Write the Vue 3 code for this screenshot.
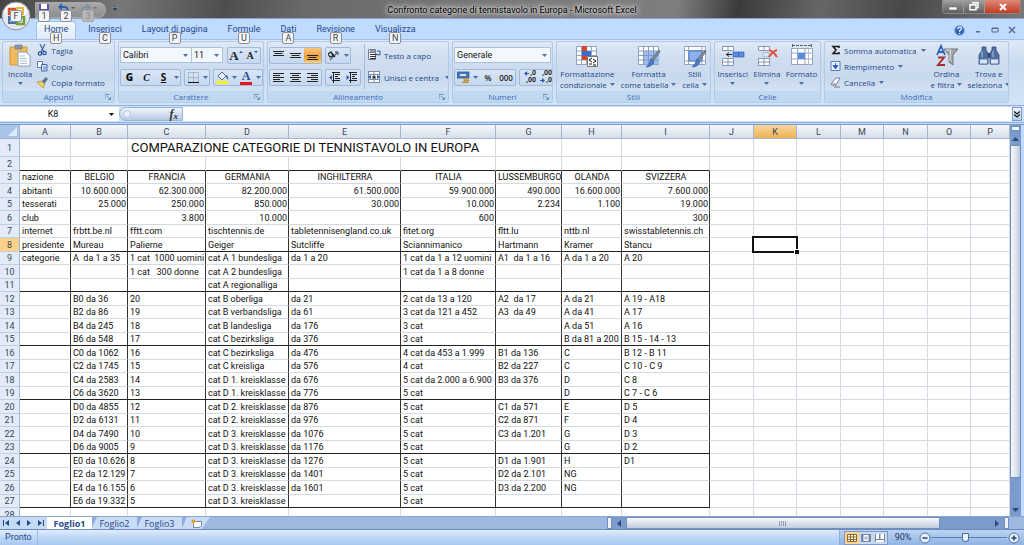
<script setup>
import { ref } from 'vue'

const tabs = [
  { label: 'Home', key: 'H' },
  { label: 'Inserisci', key: 'C' },
  { label: 'Layout di pagina', key: 'P' },
  { label: 'Formule', key: 'U' },
  { label: 'Dati', key: 'A' },
  { label: 'Revisione', key: 'R' },
  { label: 'Visualizza', key: 'N' }
]
const activeTab = ref('Home')
const sheets = ['Foglio1', 'Foglio2', 'Foglio3']
const activeSheet = ref('Foglio1')
const zoom = ref(90)

const columns = 'ABCDEFGHIJKLMNOP'.split('')
const spare = columns.slice(9)
const dataColumns = columns.slice(0, 9)
const lines = [
  ['nazione', 'BELGIO', 'FRANCIA', 'GERMANIA', 'INGHILTERRA', 'ITALIA', 'LUSSEMBURGO', 'OLANDA', 'SVIZZERA'],
  ['abitanti', '10.600.000', '62.300.000', '82.200.000', '61.500.000', '59.900.000', '490.000', '16.600.000', '7.600.000'],
  ['tesserati', '25.000', '250.000', '850.000', '30.000', '10.000', '2.234', '1.100', '19.000'],
  ['club', '', '3.800', '10.000', '', '600', '', '', '300'],
  ['internet', 'frbtt.be.nl', 'fftt.com', 'tischtennis.de', 'tabletennisengland.co.uk', 'fitet.org', 'fltt.lu', 'nttb.nl', 'swisstabletennis.ch'],
  ['presidente', 'Mureau', 'Palierne', 'Geiger', 'Sutcliffe', 'Sciannimanico', 'Hartmann', 'Kramer', 'Stancu'],
  ['categorie', 'A  da 1 a 35', '1 cat  1000 uomini', 'cat A 1 bundesliga', 'da 1 a 20', '1 cat da 1 a 12 uomini', 'A1  da 1 a 16', 'A da 1 a 20', 'A 20'],
  ['', '', '1 cat   300 donne', 'cat A 2 bundesliga', '', '1 cat da 1 a 8 donne', '', '', ''],
  ['', '', '', 'cat A regionalliga', '', '', '', '', ''],
  ['', 'B0 da 36', '20', 'cat B oberliga', 'da 21', '2 cat da 13 a 120', 'A2  da 17', 'A da 21', 'A 19 - A18'],
  ['', 'B2 da 86', '19', 'cat B verbandsliga', 'da 61', '3 cat da 121 a 452', 'A3  da 49', 'A da 41', 'A 17'],
  ['', 'B4 da 245', '18', 'cat B landesliga', 'da 176', '3 cat', '', 'A da 51', 'A 16'],
  ['', 'B6 da 548', '17', 'cat C bezirksliga', 'da 376', '3 cat', '', 'B da 81 a 200', 'B 15 - 14 - 13'],
  ['', 'C0 da 1062', '16', 'cat C bezirksliga', 'da 476', '4 cat da 453 a 1.999', 'B1 da 136', 'C', 'B 12 - B 11'],
  ['', 'C2 da 1745', '15', 'cat C kreisliga', 'da 576', '4 cat', 'B2 da 227', 'C', 'C 10 - C 9'],
  ['', 'C4 da 2583', '14', 'cat D 1. kreisklasse', 'da 676', '5 cat da 2.000 a 6.900', 'B3 da 376', 'D', 'C 8'],
  ['', 'C6 da 3620', '13', 'cat D 1. kreisklasse', 'da 776', '5 cat', '', 'D', 'C 7 - C 6'],
  ['', 'D0 da 4855', '12', 'cat D 2. kreisklasse', 'da 876', '5 cat', 'C1 da 571', 'E', 'D 5'],
  ['', 'D2 da 6131', '11', 'cat D 2. kreisklasse', 'da 976', '5 cat', 'C2 da 871', 'F', 'D 4'],
  ['', 'D4 da 7490', '10', 'cat D 3. kreisklasse', 'da 1076', '5 cat', 'C3 da 1.201', 'G', 'D 3'],
  ['', 'D6 da 9005', '9', 'cat D 3. kreisklasse', 'da 1176', '5 cat', '', 'G', 'D 2'],
  ['', 'E0 da 10.626', '8', 'cat D 3. kreisklasse', 'da 1276', '5 cat', 'D1 da 1.901', 'H', 'D1'],
  ['', 'E2 da 12.129', '7', 'cat D 3. kreisklasse', 'da 1401', '5 cat', 'D2 da 2.101', 'NG', ''],
  ['', 'E4 da 16.155', '6', 'cat D 3. kreisklasse', 'da 1601', '5 cat', 'D3 da 2.200', 'NG', ''],
  ['', 'E6 da 19.332', '5', 'cat D 3. kreisklasse', '', '5 cat', '', '', '']
]
const rows = lines.map((cells, i) => ({ n: i + 3, cells }))
const sectionEnds = [8, 11, 15, 19, 23, 27]

function cellClass(row, i) {
  return {
    center: row.n === 3 && i > 0,
    right: row.n > 3 && row.n < 7 && i > 0
  }
}
</script>

<template>
  <div class="app">
    <header class="titlebar">
      <button class="office" aria-label="Pulsante Office">
        <svg width="30" height="30" viewBox="0 0 30 30">
          <circle cx="15" cy="15" r="14" fill="#e3e6ea" stroke="#8f959c" />
          <ellipse cx="15" cy="10" rx="11" ry="8" fill="#fbfcfd" />
          <path d="M8 8h6v5H8z" fill="none" stroke="#d8532c" stroke-width="2.500" />
          <path d="M16 7h6v6h-6z" fill="none" stroke="#ecb63e" stroke-width="2" />
          <path d="M8 16h6v6H8z" fill="none" stroke="#3e74b8" stroke-width="2" />
          <path d="M16 16h7v7h-7z" fill="none" stroke="#6da13c" stroke-width="2.500" />
        </svg>
        <span class="tip mid">F</span>
      </button>
      <div class="quick">
        <button aria-label="Salva">
          <svg width="12" height="12" viewBox="0 0 12 12"><path d="M1 1h10v10H1z" fill="#5a55b5" /><path d="M3 1h6v5H3z" fill="#fff" /><path d="M3 8h6v3H3z" fill="#d6d9ee" /></svg>
          <span class="tip low">1</span>
        </button>
        <button aria-label="Annulla">
          <svg width="17" height="12" viewBox="0 0 17 12"><path d="M2 4h5q4 1 2 6" fill="none" stroke="#2d5cb8" stroke-width="2" /><path d="M0 4l4-4v8z" fill="#2d5cb8" /><path d="M13 4h4l-2 2z" fill="#555" /></svg>
          <span class="tip low">2</span>
        </button>
        <button aria-label="Ripeti">
          <svg width="17" height="12" viewBox="0 0 17 12"><path d="M9 4H5Q1 5 3 10" fill="none" stroke="#7f8ea5" stroke-width="2" /><path d="M11 4L7 0v8z" fill="#7f8ea5" /><path d="M13 4h4l-2 2z" fill="#777" /></svg>
          <span class="tip low dim">3</span>
        </button>
      </div>
      <button class="customize" aria-label="Personalizza barra di accesso rapido">
        <svg width="6" height="6" viewBox="0 0 6 6"><path d="M1 0h4v1H1zM0 2h6L3 5z" fill="#1c2a44" stroke="#9db3d8" stroke-width=".4" /></svg>
      </button>
      <h1 class="caption">Confronto categorie di tennistavolo in Europa - Microsoft Excel</h1>
      <div class="winbtns">
        <button aria-label="Riduci a icona"><svg width="10" height="8" viewBox="0 0 10 8"><path d="M1 4h8v3H1z" fill="#fff" stroke="#555" stroke-width=".5" /></svg></button>
        <button aria-label="Ripristino"><svg width="10" height="9" viewBox="0 0 10 9"><path d="M3 .8h6v5H7M1 2.800h6v5H1z" fill="none" stroke="#fff" stroke-width="1.400" /></svg></button>
        <button class="close" aria-label="Chiudi"><svg width="10" height="8" viewBox="0 0 10 8"><path d="M2 1l6 6M8 1L2 7" stroke="#fff" stroke-width="2" /></svg></button>
      </div>
    </header>

    <nav class="tabs">
      <button v-for="t in tabs" :key="t.key" class="tab" :class="{ on: activeTab === t.label }" @click="activeTab = t.label">
        {{ t.label }}<span class="tip under">{{ t.key }}</span>
      </button>
      <div class="mdi">
        <button aria-label="Guida"><svg width="11" height="11" viewBox="0 0 11 11"><circle cx="5.500" cy="5.500" r="5" fill="#2f66b8" stroke="#9ebde8" /><path d="M3.800 4.200q0-2 1.800-2t1.800 1.600q0 1-1.800 2v1M5.600 8v1" fill="none" stroke="#fff" stroke-width="1.200" /></svg></button>
        <button aria-label="Riduci finestra"><svg width="8" height="8" viewBox="0 0 8 8"><path d="M2 5h4v1.500H2z" fill="#5b6b84" /></svg></button>
        <button aria-label="Ripristina finestra"><svg width="8" height="8" viewBox="0 0 8 8"><path d="M1 2h6v4H1zM1 2.500h6" fill="none" stroke="#5b6b84" /></svg></button>
        <button aria-label="Chiudi finestra"><svg width="8" height="8" viewBox="0 0 8 8"><path d="M1 1l6 6M7 1L1 7" stroke="#5b6b84" stroke-width="1.400" /></svg></button>
      </div>
    </nav>

    <section class="ribbon">
      <div class="group g-clip">
        <div class="body">
          <button class="big">
            <svg width="24" height="24" viewBox="0 0 24 24"><path d="M2 3h17v18H2z" fill="#f0bb58" stroke="#d29a3a" /><path d="M7 1h7v4H7z" fill="#8b96a8" stroke="#66718a" stroke-width=".6" /><path d="M10 8h8l4 4v10H10z" fill="#fff" stroke="#8a9cbc" /><path d="M12 12h5M12 14.500h7M12 17h7M12 19.500h7" stroke="#a9bbd9" /></svg>
            <span>Incolla</span>
            <svg class="arr" width="5" height="3" viewBox="0 0 5 3"><path d="M0 0h5L2.500 3z" /></svg>
          </button>
          <div class="stack">
            <button class="row"><svg width="11" height="12" viewBox="0 0 11 12"><path d="M3 0l4 8M8 0L4 8" stroke="#4a6aa5" stroke-width="1.300" /><circle cx="3" cy="9.500" r="1.700" fill="none" stroke="#274f9c" stroke-width="1.200" /><circle cx="7.500" cy="9" r="1.700" fill="none" stroke="#274f9c" stroke-width="1.200" /></svg>Taglia</button>
            <button class="row"><svg width="11" height="12" viewBox="0 0 11 12"><path d="M.5 1.500h5v6h-5z" fill="#fff" stroke="#5478b5" /><path d="M4.500 4.500h5.500v6.500H4.500z" fill="#dfe9f8" stroke="#3f67ad" /><path d="M6 7h3M6 9h3" stroke="#5478b5" /></svg>Copia</button>
            <button class="row"><svg width="11" height="12" viewBox="0 0 11 12"><path d="M0 6l5-1 3 3-2 4z" fill="#f0cf62" stroke="#a98324" stroke-width=".6" /><path d="M5 5l4-4 2 2-4 5z" fill="#5d6f91" /></svg>Copia formato</button>
          </div>
        </div>
        <footer>Appunti<svg class="launch" width="6" height="6" viewBox="0 0 6 6"><path d="M0 5V.5h4.500M2 2l3 3M5.500 3v2.500H3" /></svg></footer>
      </div>

      <div class="group g-font">
        <div class="body lines">
          <div class="line">
            <div class="combo wide"><select aria-label="Tipo di carattere"><option>Calibri</option></select><svg class="arr" width="5" height="3" viewBox="0 0 5 3"><path d="M0 0h5L2.500 3z" /></svg></div>
            <div class="combo num"><select aria-label="Dimensione carattere"><option>11</option></select><svg class="arr" width="5" height="3" viewBox="0 0 5 3"><path d="M0 0h5L2.500 3z" /></svg></div>
            <div class="box push">
              <button class="serif big-a" aria-label="Aumenta dimensione carattere">A<svg width="4" height="8" viewBox="0 0 4 8"><path d="M0 2h4L2 0z" fill="#2a4f96" /></svg></button>
              <button class="serif small-a" aria-label="Riduci dimensione carattere">A<svg width="4" height="8" viewBox="0 0 4 8"><path d="M0 0h4L2 2z" fill="#2a4f96" /></svg></button>
            </div>
          </div>
          <div class="line">
            <div class="box"><button class="fmt"><b>G</b></button><button class="fmt"><i>C</i></button><button class="fmt"><u>S</u></button><button class="thin" aria-label="Opzioni sottolineato"><svg class="arr" width="5" height="3" viewBox="0 0 5 3"><path d="M0 0h5L2.500 3z" /></svg></button></div>
            <div class="box"><button class="sq" aria-label="Bordi"><svg width="11" height="11" viewBox="0 0 11 11"><path d="M.5 .5h10v9.500M5.500 .5v10M.5 .5v10M.5 5.500h10" fill="none" stroke="#8292ac" stroke-dasharray="1 1" /><path d="M0 10.500h11" stroke="#111" /></svg></button><button class="thin" aria-label="Opzioni bordi"><svg class="arr" width="5" height="3" viewBox="0 0 5 3"><path d="M0 0h5L2.500 3z" /></svg></button></div>
            <div class="box"><button class="sq" aria-label="Colore riempimento"><svg width="13" height="13" viewBox="0 0 13 13"><path d="M0 10h12v3H0z" fill="#ffee22" /><path d="M2 5l4-4 4 4-4 4z" fill="#e8edf5" stroke="#56698e" /><path d="M10 4q3 1 2 5l-2-3z" fill="#3764b4" /></svg></button><button class="thin" aria-label="Opzioni riempimento"><svg class="arr" width="5" height="3" viewBox="0 0 5 3"><path d="M0 0h5L2.500 3z" /></svg></button><button class="fontcolor" aria-label="Colore carattere">A</button><button class="thin" aria-label="Opzioni colore carattere"><svg class="arr" width="5" height="3" viewBox="0 0 5 3"><path d="M0 0h5L2.500 3z" /></svg></button></div>
          </div>
        </div>
        <footer>Carattere<svg class="launch" width="6" height="6" viewBox="0 0 6 6"><path d="M0 5V.5h4.500M2 2l3 3M5.500 3v2.500H3" /></svg></footer>
      </div>

      <div class="group g-align">
        <div class="body">
          <div class="lines">
            <div class="line">
              <div class="box">
                <button class="al" aria-label="Allinea in alto"><svg width="11" height="11" viewBox="0 0 11 11"><path d="M0 1.500h11M1.500 3.500h8M0 5.500h11" /></svg></button>
                <button class="al" aria-label="Allinea al centro verticalmente"><svg width="11" height="11" viewBox="0 0 11 11"><path d="M0 3.500h11M1.500 5.500h8M0 7.500h11" /></svg></button>
                <button class="al hot" aria-label="Allinea in basso"><svg width="11" height="11" viewBox="0 0 11 11"><path d="M0 5.500h11M1.500 7.500h8M0 9.500h11" /></svg></button>
              </div>
              <div class="box"><button class="sq" aria-label="Orientamento"><svg width="12" height="11" viewBox="0 0 12 11"><path d="M2 10l8-8M10 2H7M10 2v3" fill="none" stroke="#5d6c86" stroke-width="1.300" /><path d="M0 4l3-2 2 4-3 1zM4 3l3 4" fill="none" stroke="#222" stroke-width="1.200" /></svg></button><button class="thin" aria-label="Opzioni orientamento"><svg class="arr" width="5" height="3" viewBox="0 0 5 3"><path d="M0 0h5L2.500 3z" /></svg></button></div>
            </div>
            <div class="line">
              <div class="box">
                <button class="al" aria-label="Allinea a sinistra"><svg width="11" height="11" viewBox="0 0 11 11"><path d="M0 1.500h11M0 3.500h7M0 5.500h11M0 7.500h7M0 9.500h11" /></svg></button>
                <button class="al" aria-label="Centra"><svg width="11" height="11" viewBox="0 0 11 11"><path d="M0 1.500h11M2 3.500h7M0 5.500h11M2 7.500h7M0 9.500h11" /></svg></button>
                <button class="al" aria-label="Allinea a destra"><svg width="11" height="11" viewBox="0 0 11 11"><path d="M0 1.500h11M4 3.500h7M0 5.500h11M4 7.500h7M0 9.500h11" /></svg></button>
              </div>
              <div class="box">
                <button class="al" aria-label="Riduci rientro"><svg width="11" height="11" viewBox="0 0 11 11"><path d="M3 .5h8M6 2.500h5M6 4.500h3M6 6.500h5M3 8.500h8M4.500 0v11" /><path d="M0 5.500l3-2.500v5z" fill="#2c59ab" stroke="none" /></svg></button>
                <button class="al" aria-label="Aumenta rientro"><svg width="11" height="11" viewBox="0 0 11 11"><path d="M3 .5h8M6 2.500h5M6 4.500h3M6 6.500h5M3 8.500h8M4.500 0v11" /><path d="M3.500 5.500L.5 3v5z" fill="#2c59ab" stroke="none" /></svg></button>
              </div>
            </div>
          </div>
          <div class="lines wrapcol">
            <button class="row"><svg width="13" height="12" viewBox="0 0 13 12"><path d="M.5 .5h7v3h-7zM.5 3.500h7v7h-7z" fill="#fff" stroke="#6e7f9c" /><path d="M2 5.500h8M2 7.500h6M2 9.500h6M2 2h5" stroke="#333" /><path d="M9 2h3v4h-2" fill="none" stroke="#2c59ab" /></svg>Testo a capo</button>
            <button class="row"><svg width="13" height="12" viewBox="0 0 13 12"><path d="M.5 .5h11v11H.5zM.5 3.500h11M.5 8.500h11M6 .5v3M6 8.500v3" fill="#fff" stroke="#7a8aa5" /><path d="M0 6l3-2v4zM12 6L9 4v4z" fill="#2c59ab" /><path d="M5 8V5h2v3M5 6.500h2" fill="none" stroke="#222" /></svg>Unisci e centra<svg class="arr far" width="5" height="3" viewBox="0 0 5 3"><path d="M0 0h5L2.500 3z" /></svg></button>
          </div>
        </div>
        <footer>Allineamento<svg class="launch" width="6" height="6" viewBox="0 0 6 6"><path d="M0 5V.5h4.500M2 2l3 3M5.500 3v2.500H3" /></svg></footer>
      </div>

      <div class="group g-num">
        <div class="body lines">
          <div class="line"><div class="combo full"><select aria-label="Formato numero"><option>Generale</option></select><svg class="arr" width="5" height="3" viewBox="0 0 5 3"><path d="M0 0h5L2.500 3z" /></svg></div></div>
          <div class="line">
            <div class="box"><button class="sq" aria-label="Formato contabilità"><svg width="13" height="12" viewBox="0 0 13 12"><path d="M0 1h12v6H0z" fill="#4877bd" stroke="#2c559c" stroke-width=".8" /><path d="M3 4h6" stroke="#d5e2f6" stroke-width="2" /><path d="M6 7h5v1H6zM7 9h5v1H7zM5 11h6v1H5z" fill="#e0b33c" stroke="#a87d1b" stroke-width=".6" /></svg></button><button class="thin" aria-label="Altri formati contabilità"><svg class="arr" width="5" height="3" viewBox="0 0 5 3"><path d="M0 0h5L2.500 3z" /></svg></button><button class="txt">%</button><button class="txt">000</button></div>
            <div class="box">
              <button class="dec" aria-label="Aumenta decimali"><span><svg width="5" height="5" viewBox="0 0 5 5"><path d="M0 2.500L3 0v2h2v1H3v2z" fill="#2c59ab" /></svg>,0</span><span>,00</span></button>
              <button class="dec" aria-label="Diminuisci decimali"><span>,00</span><span><svg width="5" height="5" viewBox="0 0 5 5"><path d="M5 2.500L2 0v2H0v1h2v2z" fill="#2c59ab" /></svg>,0</span></button>
            </div>
          </div>
        </div>
        <footer>Numeri<svg class="launch" width="6" height="6" viewBox="0 0 6 6"><path d="M0 5V.5h4.500M2 2l3 3M5.500 3v2.500H3" /></svg></footer>
      </div>

      <div class="group g-style">
        <div class="body spread">
          <button class="big">
            <svg width="24" height="24" viewBox="0 0 24 24"><path d="M1.500 2.500h20v18h-20zM1.500 7h20M1.500 11.500h20M1.500 16h20M6.500 2.500v18M11.500 2.500v18M16.500 2.500v18" fill="#fff" stroke="#93a4c0" /><path d="M7 2h5v5H7zM7 12h5v4H7z" fill="#d8452c" /><path d="M7 7h9v5H7z" fill="#3d6cc0" /><path d="M12.500 12.500h10v10h-10z" fill="#fff" stroke="#777" /><path d="M17 14l-3 2 3 2M14 20h3M18 15l3 2-3 2M18 21h3" fill="none" stroke="#111" /></svg>
            <span>Formattazione</span>
            <span class="l2">condizionale<svg class="arr" width="5" height="3" viewBox="0 0 5 3"><path d="M0 0h5L2.500 3z" /></svg></span>
          </button>
          <button class="big">
            <svg width="24" height="24" viewBox="0 0 24 24"><path d="M1.500 2.500h20v18h-20z" fill="#fff" stroke="#93a4c0" /><path d="M7 7h15v13H7z" fill="#9fbdf0" /><path d="M1.500 7h20M1.500 11.500h20M1.500 16h20M6.500 2.500v18M11.500 2.500v18M16.500 2.500v18" stroke="#8299c4" /><path d="M23 8l-7 9-2-2 8-9z" fill="#7e8a9c" stroke="#4d586b" stroke-width=".6" /><path d="M14 15l3 3q-2 5-8 5 3-2 5-8z" fill="#4c7cc9" stroke="#2f5596" stroke-width=".6" /></svg>
            <span>Formatta</span>
            <span class="l2">come tabella<svg class="arr" width="5" height="3" viewBox="0 0 5 3"><path d="M0 0h5L2.500 3z" /></svg></span>
          </button>
          <button class="big">
            <svg width="24" height="24" viewBox="0 0 24 24"><path d="M1.500 2.500h21v18h-21zM1.500 6.500h21M1.500 17h21M5.500 2.500v18M19 2.500v18" fill="#fff" stroke="#93a4c0" /><path d="M6 7h13v10H6z" fill="#8db0ef" stroke="#5579bb" /><path d="M23 8l-7 9-2-2 8-9z" fill="#7e8a9c" stroke="#4d586b" stroke-width=".6" /><path d="M14 15l3 3q-2 5-8 5 3-2 5-8z" fill="#4c7cc9" stroke="#2f5596" stroke-width=".6" /></svg>
            <span>Stili</span>
            <span class="l2">cella<svg class="arr" width="5" height="3" viewBox="0 0 5 3"><path d="M0 0h5L2.500 3z" /></svg></span>
          </button>
        </div>
        <footer>Stili</footer>
      </div>

      <div class="group g-cells">
        <div class="body spread">
          <button class="big">
            <svg width="24" height="24" viewBox="0 0 24 24"><path d="M1.500 2.500h11v4h-11zM7 2.500v4M1.500 14.500h11v7h-11zM7 14.500v7M1.500 18h11" fill="#fff" stroke="#8494b0" /><path d="M12 8h11v5H12z" fill="#5b8ade" stroke="#3763b2" stroke-width=".7" /><path d="M17.500 8v5" stroke="#3763b2" /><path d="M5 10.500h6M8 8.500l-2.500 2L8 12.500" fill="none" stroke="#222" /></svg>
            <span>Inserisci</span><svg class="arr" width="5" height="3" viewBox="0 0 5 3"><path d="M0 0h5L2.500 3z" /></svg>
          </button>
          <button class="big">
            <svg width="24" height="24" viewBox="0 0 24 24"><path d="M3.500 2.500h11v4h-11zM9 2.500v4M3.500 14.500h11v7h-11zM9 14.500v7M3.500 18h11" fill="#fff" stroke="#8494b0" /><path d="M8 8.500h6v4H8z" fill="#dce7f8" stroke="#7d94bd" stroke-dasharray="1 1" /><path d="M14 6q5 2 8 7M22 6q-5 2-8 7" fill="none" stroke="#e05545" stroke-width="2" /></svg>
            <span>Elimina</span><svg class="arr" width="5" height="3" viewBox="0 0 5 3"><path d="M0 0h5L2.500 3z" /></svg>
          </button>
          <button class="big">
            <svg width="24" height="24" viewBox="0 0 24 24"><path d="M2 1.500h20M2.500 0v3M21.500 0v3" stroke="#555f73" stroke-dasharray="3 1" /><path d="M1.500 4.500h21v16h-21zM1.500 9h21M1.500 15h21M7.500 4.500v16M15 4.500v16" fill="#fff" stroke="#94a5c2" /><path d="M8 9h7v6H8z" fill="#5b8ade" /><path d="M18.500 4.500v16" stroke="#b3c0d6" /></svg>
            <span>Formato</span><svg class="arr" width="5" height="3" viewBox="0 0 5 3"><path d="M0 0h5L2.500 3z" /></svg>
          </button>
        </div>
        <footer>Celle</footer>
      </div>

      <div class="group g-edit">
        <div class="body">
          <div class="stack">
            <button class="row"><svg width="11" height="12" viewBox="0 0 11 12"><path d="M9 4V2.500H3L6 6l-3 3.500h6V8" fill="none" stroke="#1a1a1a" stroke-width="1.500" /></svg>Somma automatica<svg class="arr" width="5" height="3" viewBox="0 0 5 3"><path d="M0 0h5L2.500 3z" /></svg></button>
            <button class="row"><svg width="11" height="12" viewBox="0 0 11 12"><path d="M1 1.500h9v9H1z" fill="#e8f0fb" stroke="#5d7fbd" /><path d="M5.500 3v3M3 5.500h5l-2.500 3.500z" fill="#2159c4" stroke="#2159c4" stroke-width=".8" /></svg>Riempimento<svg class="arr" width="5" height="3" viewBox="0 0 5 3"><path d="M0 0h5L2.500 3z" /></svg></button>
            <button class="row"><svg width="11" height="12" viewBox="0 0 11 12"><path d="M1 8l5-6h4l-4 7H2z" fill="#fff" stroke="#6f7f9b" /><path d="M1 8l4-1 1 2H2z" fill="#e6bcc0" stroke="#6f7f9b" stroke-width=".5" /><path d="M4 11h6" stroke="#555" stroke-width=".8" /></svg>Cancella<svg class="arr" width="5" height="3" viewBox="0 0 5 3"><path d="M0 0h5L2.500 3z" /></svg></button>
          </div>
          <button class="big">
            <svg width="24" height="24" viewBox="0 0 24 24"><path d="M2 11L6 2l4 9M4 8h5" fill="none" stroke="#3262ba" stroke-width="1.800" /><path d="M3 13.500h6L3 21h7" fill="none" stroke="#a92e2e" stroke-width="2" /><path d="M9 5h14l-5 6v10l-4-3v-7z" fill="#a3a6aa" stroke="#72767c" /><path d="M11 6h5l-1 5v6" fill="none" stroke="#e0e2e4" /></svg>
            <span>Ordina</span>
            <span class="l2">e filtra<svg class="arr" width="5" height="3" viewBox="0 0 5 3"><path d="M0 0h5L2.500 3z" /></svg></span>
          </button>
          <button class="big">
            <svg width="24" height="24" viewBox="0 0 24 24"><path d="M5 3h4v3l2 3v11H2v-9l3-5z" fill="#53719f" stroke="#33507f" stroke-width=".8" /><path d="M15 3h4v3l3 5v9h-9V9l2-3z" fill="#53719f" stroke="#33507f" stroke-width=".8" /><path d="M11 9h2v5h-2z" fill="#2e4978" /><path d="M2.500 15h8v5h-8zM13.500 15h8v5h-8z" fill="#dae5f6" stroke="#5876a8" /><path d="M5 7v6M16 7v6" stroke="#a9c0e4" /></svg>
            <span>Trova e</span>
            <span class="l2">seleziona<svg class="arr" width="5" height="3" viewBox="0 0 5 3"><path d="M0 0h5L2.500 3z" /></svg></span>
          </button>
        </div>
        <footer>Modifica</footer>
      </div>
    </section>

    <section class="formula">
      <div class="namebox">
        <input aria-label="Casella nome" value="K8">
        <svg width="5" height="3" viewBox="0 0 5 3"><path d="M0 0h5L2.500 3z" fill="#111" /></svg>
      </div>
      <div class="pill"><span class="knob"></span><button aria-label="Inserisci funzione"><i>f</i><i class="x">x</i></button></div>
      <input class="fx" aria-label="Barra della formula" value="">
      <button class="expand" aria-label="Espandi barra della formula"><svg width="6" height="7" viewBox="0 0 6 7"><path d="M0 .5l3 2.500 3-2.500M0 3.500L3 6l3-2.500" fill="none" stroke="#111" stroke-width="1.300" /></svg></button>
    </section>

    <main class="pane">
      <div class="sheet">
        <table>
          <colgroup>
            <col class="w-head"><col v-for="c in columns" :key="c" :class="'w-' + c">
          </colgroup>
          <thead>
            <tr>
              <th class="corner"><svg width="9" height="9" viewBox="0 0 9 9"><path d="M9 0v9H0z" fill="#dfeafa" /></svg></th>
              <th v-for="c in columns" :key="c" :class="{ sel: c === 'K' }">{{ c }}</th>
            </tr>
          </thead>
          <tbody>
            <tr class="first">
              <th>1</th><td></td><td></td><td colspan="4" class="title">COMPARAZIONE CATEGORIE DI TENNISTAVOLO IN EUROPA</td><td></td><td></td><td></td>
              <td v-for="c in spare" :key="c"></td>
            </tr>
            <tr class="section">
              <th>2</th><td v-for="c in dataColumns" :key="c" class="d"></td><td v-for="c in spare" :key="c"></td>
            </tr>
            <tr v-for="row in rows" :key="row.n" class="data" :class="{ section: sectionEnds.includes(row.n) }">
              <th :class="{ sel: row.n === 8 }">{{ row.n }}</th>
              <td v-for="(v, i) in row.cells" :key="i" class="d v" :class="cellClass(row, i)">{{ v }}</td>
              <td v-for="c in spare" :key="c" :class="{ cursor: row.n === 8 && c === 'K' }"></td>
            </tr>
            <tr><th>28</th><td v-for="c in columns" :key="c"></td></tr>
          </tbody>
        </table>
      </div>
      <div class="vscroll">
        <span class="split"></span>
        <button aria-label="Scorri in alto"><svg width="7" height="4" viewBox="0 0 7 4"><path d="M0 4h7L3.500 0z" fill="#2b4a82" /></svg></button>
        <div class="thumb"></div>
        <div class="track"></div>
        <button aria-label="Scorri in basso"><svg width="7" height="4" viewBox="0 0 7 4"><path d="M0 0h7L3.500 4z" fill="#2b4a82" /></svg></button>
      </div>
    </main>

    <div class="bottom">
      <div class="navs">
        <button aria-label="Primo foglio"><svg width="6" height="6" viewBox="0 0 6 6"><path d="M0 0h1v6H0zM6 0v6L2 3z" /></svg></button>
        <button aria-label="Foglio precedente"><svg width="6" height="6" viewBox="0 0 6 6"><path d="M5 0v6L1 3z" /></svg></button>
        <button aria-label="Foglio successivo"><svg width="6" height="6" viewBox="0 0 6 6"><path d="M1 0v6l4-3z" /></svg></button>
        <button aria-label="Ultimo foglio"><svg width="6" height="6" viewBox="0 0 6 6"><path d="M5 0h1v6H5zM0 0v6l4-3z" /></svg></button>
      </div>
      <button v-for="s in sheets" :key="s" class="sheettab" :class="{ on: s === activeSheet }" @click="activeSheet = s">{{ s }}</button>
      <button class="sheettab new" aria-label="Inserisci foglio di lavoro"><svg width="11" height="9" viewBox="0 0 11 9"><path d="M2.500 2.500h8v4L8 8.500H2.500z" fill="#fff" stroke="#7489ae" /><path d="M2.500 0v5M0 2.500h5M1 1l3 3M4 1L1 4" stroke="#e2a02c" /></svg></button>
      <div class="gap"></div>
      <div class="hscroll">
        <span class="split"></span>
        <button aria-label="Scorri a sinistra"><svg width="4" height="7" viewBox="0 0 4 7"><path d="M4 0v7L0 3.500z" fill="#2b4a82" /></svg></button>
        <div class="thumb"><svg width="7" height="5" viewBox="0 0 7 5"><path d="M.5 0v5M2.500 0v5M4.500 0v5M6.500 0v5" stroke="#7d8ba3" stroke-width=".8" /></svg></div>
        <div class="track"></div>
        <button aria-label="Scorri a destra"><svg width="4" height="7" viewBox="0 0 4 7"><path d="M0 0v7l4-3.500z" fill="#2b4a82" /></svg></button>
        <span class="split"></span>
      </div>
    </div>

    <footer class="status">
      <span class="ready">Pronto</span>
      <div class="tools">
        <div class="views">
          <button class="hot" aria-label="Normale"><svg width="10" height="8" viewBox="0 0 10 8"><path d="M.5 .5h9v7h-9zM.5 3h9M.5 5.500h9M3.500 .5v7M6.500 .5v7" fill="#fff" stroke="#8a6a2c" /></svg></button>
          <button aria-label="Layout di pagina"><svg width="10" height="8" viewBox="0 0 10 8"><path d="M0 0h10v8H0z" fill="#7487a8" /><path d="M2.500 1h5v6h-5z" fill="#fff" /><path d="M3.500 2.500h3v3h-3z" fill="#a9b7cf" /></svg></button>
          <button aria-label="Anteprima interruzioni di pagina"><svg width="10" height="8" viewBox="0 0 10 8"><path d="M0 0h10v8H0z" fill="#7487a8" /><path d="M1 0h3v5H1zM5.500 0H9v5H5.500zM1 6h8v2H1z" fill="#fff" /></svg></button>
        </div>
        <button class="pct">{{ zoom }}%</button>
        <button class="round" aria-label="Zoom indietro"><svg width="12" height="12" viewBox="0 0 12 12"><circle cx="6" cy="6" r="5" fill="#e6effb" stroke="#5574a8" /><path d="M3.500 6h5" stroke="#24406f" stroke-width="1.500" /></svg></button>
        <input v-model="zoom" type="range" min="10" max="190" aria-label="Zoom">
        <button class="round" aria-label="Zoom avanti"><svg width="12" height="12" viewBox="0 0 12 12"><circle cx="6" cy="6" r="5" fill="#e6effb" stroke="#5574a8" /><path d="M3.500 6h5M6 3.500v5" stroke="#24406f" stroke-width="1.500" /></svg></button>
      </div>
    </footer>
  </div>
</template>

<style>
body { margin: 0; }
</style>

<style scoped>
* { box-sizing: border-box; }
.app {
  height: 100vh;
  display: flex;
  flex-direction: column;
  overflow: hidden;
  background: #bfdbff;
  color: #24498a;
  font: 9px/11px Roboto, "Open Sans", sans-serif;
}
button, input, select { font: inherit; color: inherit; border: 0; padding: 0; margin: 0; background: none; }
button { display: flex; align-items: center; justify-content: center; white-space: nowrap; }
svg { display: block; flex: none; }
.arr { fill: #4b6ea9; }

.titlebar {
  position: relative;
  z-index: 2;
  flex: none;
  height: 19px;
  display: flex;
  align-items: flex-start;
  background: linear-gradient(100deg, #444 0, #777 12%, #4e4e4e 22%, #6a6a6a 30%, #777 50%, #7e7e7e 66%, #3b3b3b 72%, #666 80%, #484848 88%, #777 100%);
  border-bottom: 1px solid #8ba4c6;
}
.office { position: relative; width: 30px; height: 30px; margin: 1px 4px 0 1px; }
.quick {
  display: flex;
  gap: 4px;
  width: 71px;
  height: 16px;
  margin-top: 2px;
  border-radius: 0 8px 8px 0;
  background: linear-gradient(#a9a9a9, #8d8d8d);
  border: 1px solid #a8a8a8;
  border-left: 0;
}
.quick button { position: relative; width: 18px; height: 12px; }
.customize { width: 18px; height: 18px; }
.caption {
  position: absolute;
  left: 140px;
  right: 140px;
  top: 3px;
  margin: 0;
  text-align: center;
  font-size: 9px;
  line-height: 14px;
  font-weight: 400;
  color: #000;
  text-shadow: 0 0 3px #ddd, 0 0 5px #ddd, 0 0 8px #ccc, 0 0 8px #ccc;
}
.tip {
  position: absolute;
  left: 50%;
  transform: translateX(-50%);
  width: 12px;
  height: 12px;
  border: 1px solid #8a8f98;
  border-radius: 2px;
  background: #f3f4f7;
  color: #444;
  font-size: 9px;
  line-height: 10px;
  text-align: center;
}
.tip.mid { top: 9px; }
.tip.low { top: 7px; }
.tip.under { top: 11px; z-index: 3; }
.tab.on .under { top: 10px; }
.tip.dim { background: #b8b8b8; color: #8a8a8a; border-color: #a5a5a5; }
.winbtns { display: flex; margin-left: auto; margin-right: 3px; height: 14px; border: 1px solid #888; border-top: 0; border-radius: 0 0 4px 4px; overflow: hidden; }
.winbtns button { width: 21px; background: linear-gradient(#a2a2a2, #5e5e5e); border-right: 1px solid #999; }
.winbtns .close { width: 35px; background: linear-gradient(#dc8a78, #c33a22); border: 0; }

.tabs { position: relative; flex: none; display: flex; height: 20px; padding: 2px 8px 0 36px; background: #bfdbff; }
.tab { position: relative; padding: 0 8px 2px; margin-right: 4px; color: #24498a; }
.tab.on { background: linear-gradient(#f4f9ff, #dfeaf8); border: 1px solid #a3c0e8; border-bottom: 0; border-radius: 3px 3px 0 0; padding: 0 7px 2px; }
.mdi { display: flex; gap: 9px; margin-left: auto; align-items: center; }

.ribbon {
  flex: none;
  display: flex;
  gap: 3px;
  height: 67px;
  padding: 1px 2px 2px;
  border-top: 1px solid #a3c0e8;
  border-bottom: 1px solid #8db2e3;
  background: linear-gradient(#dce8f7, #c9daf0 40%, #d4e4f7);
  font-family: "Open Sans", sans-serif;
  font-size: 8px;
}
.group { flex: none; display: flex; flex-direction: column; border: 1px solid #b3cae8; border-radius: 2px; background: linear-gradient(#dfe9f6, #d0deef 25%, #c9d9ed 60%, #dae7f6); overflow: hidden; }
.group footer { position: relative; height: 11px; text-align: center; line-height: 11px; color: #3e6db5; background: #c1d8f1; }
.launch { position: absolute; right: 3px; top: 3px; fill: none; stroke: #6f8fbf; }
.body { flex: 1; display: flex; min-height: 0; }
.g-clip { width: 113px; }
.g-font { width: 146px; }
.g-align { width: 182px; }
.g-num { width: 101px; }
.g-style { width: 155px; }
.g-cells { width: 107px; }
.g-edit { width: 185px; }
.g-edit .body { gap: 5px; padding-left: 5px; }
.g-edit .big { padding: 2px 0 0; }
.big { flex-direction: column; justify-content: flex-start; padding: 2px 5px 0; line-height: 11px; }
.big > .arr { margin-top: 3px; }
.l2 { display: flex; align-items: center; gap: 3px; }
.spread { justify-content: space-around; }
.spread .big { padding: 2px 0 0; }
.stack { display: flex; flex-direction: column; }
.row { height: 16px; gap: 3px; justify-content: flex-start; }
.row > .arr { margin-left: 1px; }
.row > .far { margin-left: 3px; }
.lines { display: flex; flex-direction: column; gap: 4px; padding: 4px 1px 0; }
.line { display: flex; gap: 3px; height: 18px; align-items: center; }
.wrapcol { border-left: 1px solid #a9bfdd; margin: 2px 0 2px 2px; padding: 3px 0 0 3px; gap: 6px; }
.box { display: flex; height: 17px; border: 1px solid #9fb8dc; border-radius: 2px; background: linear-gradient(#d9e6f6, #c6d8ee); }
.combo { position: relative; height: 16px; background: #f3f8fe; border: 1px solid #abc1de; font-family: Roboto, sans-serif; font-size: 9px; }
.combo select { appearance: none; width: 100%; height: 14px; padding-left: 2px; color: #111; display: block; }
.combo .arr { position: absolute; right: 3px; top: 6px; pointer-events: none; }
.wide { width: 72px; }
.num { width: 32px; margin-left: -4px; }
.full { width: 97px; }
.push { margin-left: 1px; }
.serif { width: 16px; font-family: "Liberation Serif", serif; font-weight: 700; color: #222; }
.big-a { font-size: 13px; }
.small-a { font-size: 10px; }
.fmt { width: 17px; font-size: 10px; color: #111; }
.fmt b { font-weight: 800; }
.fmt i { font-family: "Liberation Serif", serif; font-weight: 700; }
.fmt u { font-weight: 700; }
.thin { width: 8px; }
.sq { width: 16px; }
.txt { color: #222; font-size: 8px; font-weight: 600; width: 18px; }
.fontcolor { font: 700 12px/10px "Liberation Serif", serif; color: #2b4e94; border-bottom: 3px solid #e8141c; height: 14px; width: 12px; margin: 1px 2px 0; }
.al { width: 17px; }
.al svg { fill: none; stroke: #222; }
.al.hot { background: linear-gradient(#f7c67c, #f09b3b 60%, #fbd27c); }
.dec { width: 16px; flex-direction: column; font-family: Roboto, sans-serif; font-size: 7px; line-height: 7px; color: #222; font-weight: 700; align-items: flex-end; }
.dec span { display: flex; align-items: center; gap: 1px; }

.formula { flex: none; display: flex; height: 17px; padding: 1px 2px 1px 0; background: #cfe0f6; border-bottom: 1px solid #8fb0dc; }
.namebox { display: flex; align-items: center; width: 119px; background: #fff; padding-right: 5px; }
.namebox input { width: 106px; text-align: center; color: #111; margin-right: 3px; }
.pill { display: flex; justify-content: space-between; width: 64px; border-radius: 8px 0 0 8px; background: linear-gradient(#f0f5fb, #b7cae4); border: 1px solid #98b4db; padding-right: 4px; }
.knob { width: 8px; height: 8px; margin: 2px 3px; border-radius: 50%; border: 1px solid #b5c6df; background: #e9f0f9; }
.pill button { font: 700 12px/12px "Liberation Serif", serif; color: #333; }
.pill .x { font-size: 9px; padding-top: 3px; }
.fx { flex: 1; min-width: 0; background: #fff; }
.expand { width: 10px; background: linear-gradient(#eaf2fc, #b9cfeb); border: 1px solid #7c9bc8; }

.pane { flex: 1; min-height: 0; display: flex; margin-top: 1px; border-top: 1px solid #7d9bc6; padding-right: 3px; }
.sheet { flex: 1; min-width: 0; overflow: hidden; background: #fff; }
table { width: 100%; table-layout: fixed; border-collapse: separate; border-spacing: 0; color: #111; font-size: 9px; line-height: 12px; }
th, td { padding: 0; height: 14px; border-right: 1px solid #d3dae3; border-bottom: 1px solid #d3dae3; white-space: pre; overflow: hidden; }
th { font-weight: 400; color: #3c4656; text-align: center; }
thead th { height: 14px; background: linear-gradient(#f5f8fc, #d5deea); border-color: #a3b7cf; }
tbody th { background: #e2ebf7; border-right-color: #a3b7cf; border-bottom-color: #c0cfe2; }
thead .corner { background: #a9c4e9; }
.corner svg { margin-left: auto; margin-right: 2px; }
thead .sel { background: linear-gradient(#f8d79b, #f0b254); }
tbody .sel { background: #fcd28a; }
.first td, .first th { height: 18px; }
.title { font-size: 13px; line-height: 17px; padding-left: 3px; }
.data td, .data th { height: 13px; }
.data:nth-child(even) td, .data:nth-child(even) th { height: 14px; }
.v { padding: 0 1px 0 2px; border-right-color: #333; }
.center { text-align: center; }
.right { text-align: right; }
.section .d { border-bottom-color: #222; }
.cursor { position: relative; overflow: visible; }
.cursor::before { content: ""; position: absolute; inset: -2px; border: 2px solid #111; }
.cursor::after { content: ""; position: absolute; right: -3px; bottom: -3px; width: 4px; height: 4px; background: #111; border: 1px solid #fff; border-right: 0; border-bottom: 0; }
.w-head { width: 20px; }
.w-A { width: 51px; }
.w-B { width: 57px; }
.w-C { width: 78px; }
.w-D { width: 83px; }
.w-E { width: 112px; }
.w-F { width: 95px; }
.w-G { width: 66px; }
.w-H { width: 60px; }
.w-I { width: 88px; }
.w-J, .w-L, .w-N { width: 44px; }
.w-K, .w-M, .w-O { width: 43px; }

.vscroll { flex: none; width: 11px; display: flex; flex-direction: column; background: #7b9bcb; }
.vscroll .split { height: 5px; margin: 1px; background: #eef3fa; border: 1px solid #6f8fc0; }
.vscroll button { height: 13px; }
.vscroll .thumb { flex: 92 1 0; border: 1px solid #6f8fc0; border-radius: 1px; background: linear-gradient(90deg, #f6f8fb, #dbe2ec 60%, #bcc7d8); }
.vscroll .track { flex: 7 1 0; }

.bottom { flex: none; display: flex; height: 13px; background: #9db9df; border-top: 1px solid #8aa6cf; padding-right: 15px; font-family: "Open Sans", sans-serif; }
.navs { display: flex; width: 47px; padding: 0 3px; justify-content: space-between; background: #c5daf5; }
.navs svg { fill: #24498a; }
.sheettab { width: 45px; background: linear-gradient(115deg, #8fadd8 4px, #c9dcf5 5px); color: #24498a; }
.sheettab.on { background: #fff; font-weight: 700; }
.sheettab.new { width: 28px; clip-path: polygon(0 0, 100% 0, 70% 100%, 0 100%); }
.gap { flex: 396 1 0; }
.hscroll { flex: 402 1 0; display: flex; background: #7b9bcb; }
.hscroll .split { width: 5px; background: #eef3fa; border: 1px solid #6f8fc0; }
.hscroll button { width: 14px; }
.hscroll .thumb { flex: 315 1 0; display: flex; align-items: center; justify-content: center; border: 1px solid #6f8fc0; background: linear-gradient(#f8fafc, #d7deea 60%, #bfcadb); }
.hscroll .track { flex: 50 1 0; }

.status { flex: none; display: flex; justify-content: space-between; height: 16px; border-top: 1px solid #6c8cbf; background: linear-gradient(#e2edfb, #c3daf8 40%, #a9c8f0); }
.ready { padding: 2px 5px; border-right: 1px solid #9dbbe5; }
.tools { display: flex; align-items: center; padding: 0 4px; background: linear-gradient(#bdd3f1, #8fb3e3); border-left: 1px solid #8faedb; }
.views { display: flex; border: 1px solid #7d9ac7; }
.views button { width: 14px; height: 12px; background: #c9daf0; }
.views .hot { background: #f8d48c; }
.pct { width: 30px; color: #1c3564; }
.round { width: 13px; }
input[type="range"] { appearance: none; width: 76px; height: 12px; background: linear-gradient(#5d7fb5, #5d7fb5) center / 100% 1px no-repeat; }
input[type="range"]::-webkit-slider-thumb { appearance: none; width: 7px; height: 9px; border: 1px solid #4f6e9f; border-radius: 1px 1px 4px 4px; background: #eaf1fa; }
</style>
